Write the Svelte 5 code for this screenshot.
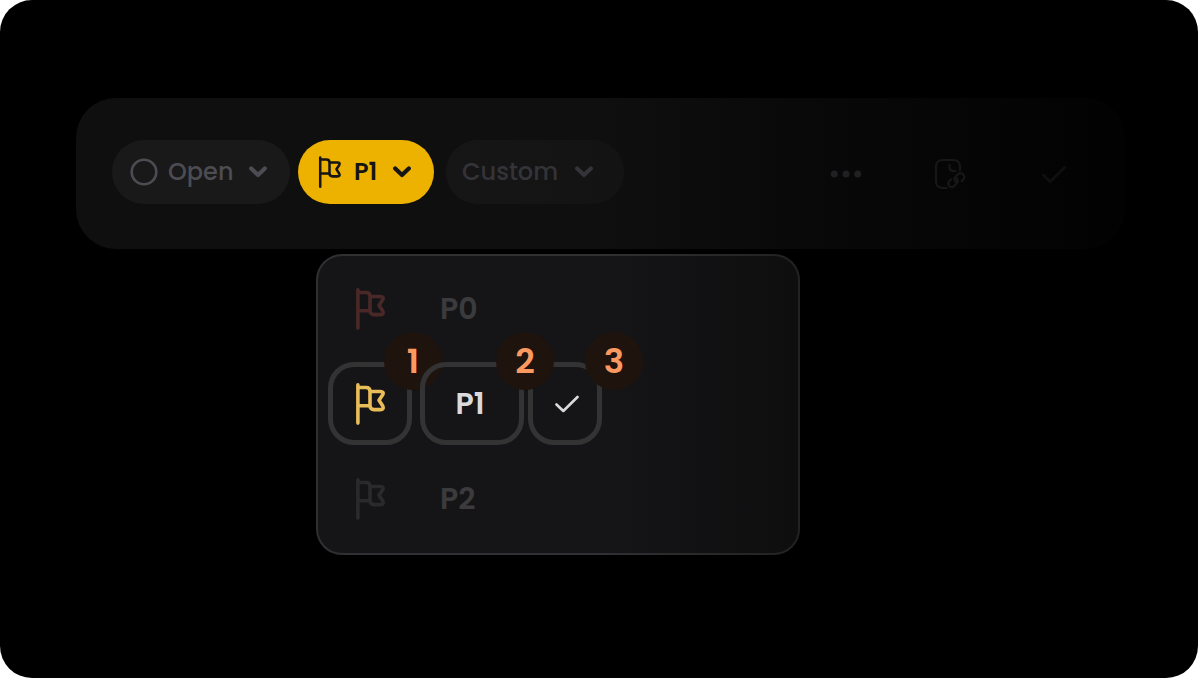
<script>
  const levels = [
    { name: 'P0', tone: 'high' },
    { name: 'P1', tone: 'medium', selected: true },
    { name: 'P2', tone: 'low' }
  ];
</script>

{#snippet flag()}
  <svg class="flag" viewBox="0 0 30 42" aria-hidden="true">
    <path d="M2.900 1.900V40.100M2.900 4.500H11q4 0 4 4V22.800H2.900M15 8.500H25.300q4.200 0 2.200 3.600L24 17.200l3.600 5.600q1.800 3.800-2.200 3.800H19q-4 0-4-4" />
  </svg>
{/snippet}

{#snippet chevron()}
  <svg class="chevron" viewBox="0 0 18 12" aria-hidden="true">
    <path d="M2.200 2.500 9 9 15.800 2.500" />
  </svg>
{/snippet}

<main>
  <section class="toolbar" aria-label="Task options">
    <button class="pill status" type="button">
      <svg class="ring" viewBox="0 0 28 28" aria-hidden="true"><circle cx="14" cy="14" r="12.3" /></svg>
      <span>Open</span>
      {@render chevron()}
    </button>
    <button class="pill priority" type="button" aria-expanded="true">
      {@render flag()}
      <span>P1</span>
      {@render chevron()}
    </button>
    <button class="pill custom" type="button">
      <span>Custom</span>
      {@render chevron()}
    </button>
    <div class="actions">
      <button class="action more" type="button" aria-label="More">
        <svg viewBox="0 0 32 32" aria-hidden="true">
          <circle cx="4.300" cy="16" r="3.500" /><circle cx="16" cy="16" r="3.500" /><circle cx="27.700" cy="16" r="3.500" />
        </svg>
      </button>
      <button class="action link" type="button" aria-label="Copy link">
        <svg viewBox="0 0 32 32" aria-hidden="true">
          <path d="M12.400 30H9Q2 30 2 23V9Q2 2 9 2h10Q26 2 26 9v3.500M15.500 7v2.500q0 3.500 3.500 3.500h2.500" />
          <path d="M21.400 23.500q-2-2.800.5-5.300l2.300-2.100q2.500-2 5 .3 2.200 2.600 0 5.100l-1.600 1.600M22.800 20.200q2.200 2.700-.2 5.300l-2.600 2.800q-2.400 1.900-4.700-.2-2.200-2.500 0-4.800l1.600-1.700" />
        </svg>
      </button>
      <button class="action done" type="button" aria-label="Done">
        <svg viewBox="0 0 32 32" aria-hidden="true"><path d="M5.500 17.200 12 23.700 26.500 9.500" /></svg>
      </button>
    </div>
  </section>

  <ul class="menu" aria-label="Priority">
    {#each levels as level}
      <li>
        <button class="row {level.tone}" class:selected={level.selected} type="button">
          <span class="cell icon">
            {@render flag()}
            {#if level.selected}<span class="badge">1</span>{/if}
          </span>
          <span class="cell name">
            {level.name}
            {#if level.selected}<span class="badge">2</span>{/if}
          </span>
          {#if level.selected}
            <span class="cell tick">
              <svg viewBox="0 0 24 18" aria-hidden="true"><path d="M1.500 9.500 8.300 16 22.500 2" /></svg>
              <span class="badge">3</span>
            </span>
          {/if}
        </button>
      </li>
    {/each}
  </ul>
</main>

<style>
  :global(body) {
    margin: 0;
    background: #fff;
  }

  main {
    box-sizing: border-box;
    min-height: 100vh;
    padding: 98px 73px 0 76px;
    border-radius: 32px;
    background: #000;
    font-family: Poppins, Inter, sans-serif;
  }

  button {
    margin: 0;
    padding: 0;
    border: 0;
    background: none;
    color: inherit;
    font: inherit;
  }

  svg {
    display: block;
    flex: none;
    fill: none;
    stroke: currentColor;
    stroke-linecap: round;
    stroke-linejoin: round;
  }

  .toolbar {
    box-sizing: border-box;
    display: flex;
    align-items: center;
    padding: 42px 55px 45px 36px;
    border-radius: 40px;
    background: linear-gradient(90deg, #0f0f0f 50%, #080808 72%, #020202 100%);
  }

  .pill {
    box-sizing: border-box;
    display: flex;
    align-items: center;
    height: 64px;
    border-radius: 32px;
    font-size: 24px;
    line-height: 32px;
  }

  .pill .chevron {
    margin-left: auto;
  }

  .status {
    width: 178px;
    padding: 0 23px 0 18px;
    gap: 10px;
    background: #191919;
    color: #4d4c52;
    font-weight: 500;
  }

  .priority {
    width: 136px;
    margin-left: 8px;
    padding: 0 23px 0 20px;
    gap: 13px;
    background: #edb100;
    color: #151515;
    font-weight: 600;
  }

  .custom {
    width: 178px;
    margin-left: 12px;
    padding: 0 31px 0 16px;
    background: linear-gradient(90deg, #161616, #131313);
    color: #343338;
    font-weight: 500;
  }

  .ring {
    width: 28px;
    stroke-width: 2.6;
  }

  .chevron {
    width: 18px;
    stroke-width: 4.2;
  }

  .flag {
    width: 30px;
    stroke-width: 3.6;
  }

  .priority .flag {
    width: 23px;
    stroke-width: 3.3;
  }

  .actions {
    display: flex;
    gap: 72px;
    margin-left: auto;
    padding-top: 4px;
  }

  .action svg {
    width: 32px;
    stroke-width: 2.2;
  }

  .more {
    color: #202022;
  }

  .more svg {
    fill: currentColor;
    stroke: none;
  }

  .link {
    color: #171717;
  }

  .done {
    color: #0f0f0f;
  }

  .done svg {
    stroke-width: 3;
  }

  .menu {
    box-sizing: border-box;
    width: 484px;
    max-width: 100%;
    margin: 5px 0 0 240px;
    padding: 5px 10px 7px;
    border: 2px solid transparent;
    border-radius: 26px;
    background:
      linear-gradient(90deg, #151517 60%, #0e0e0f) padding-box,
      linear-gradient(90deg, #303033 60%, #222224) border-box;
    list-style: none;
  }

  .row {
    display: flex;
    align-items: center;
    width: 100%;
    height: 95px;
    color: #3b3b3d;
    font-size: 30px;
    font-weight: 600;
    line-height: 40px;
  }

  .cell {
    position: relative;
    box-sizing: border-box;
    display: flex;
    align-items: center;
    justify-content: center;
    height: 83px;
    border: 5px solid transparent;
    border-radius: 26px;
  }

  .icon {
    width: 84px;
  }

  .name {
    width: 104px;
    margin-left: 8px;
    padding-left: 15px;
    justify-content: flex-start;
  }

  .tick {
    width: 74px;
    margin-left: 4px;
    padding-left: 3px;
  }

  .tick svg {
    width: 24px;
    stroke-width: 2.6;
  }

  .selected {
    color: #dadadc;
  }

  .selected .cell {
    border-color: #333334;
  }

  .selected .name {
    justify-content: center;
    padding: 0 4px 0 0;
  }

  .high .icon {
    color: #4a2828;
  }

  .medium .icon {
    color: #e9bd58;
  }

  .low .icon {
    color: #2a2a2c;
  }

  .badge {
    position: absolute;
    top: -35px;
    right: -35px;
    width: 58px;
    height: 58px;
    border-radius: 50%;
    background: #1e130d;
    color: #fb9960;
    font-size: 34px;
    line-height: 58px;
    text-align: center;
  }

  .name .badge {
    z-index: 1;
  }

  .tick .badge {
    right: -46px;
  }
</style>
